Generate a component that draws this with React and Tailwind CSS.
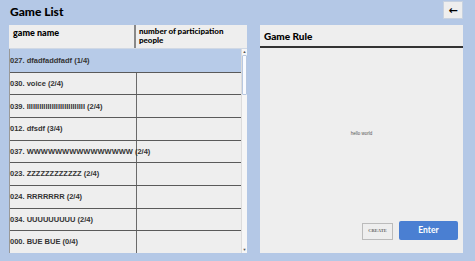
import React from "react";

const rows = [
  "027. dfadfaddfadf (1/4)",
  "030. voice (2/4)",
  "039. IIIIIIIIIIIIIIIIIIIIIIIIIIII (2/4)",
  "012. dfsdf (3/4)",
  "037. WWWWWWWWWWWWWWW (2/4)",
  "023. ZZZZZZZZZZZZ (2/4)",
  "024. RRRRRRR (2/4)",
  "034. UUUUUUUUU (2/4)",
  "000. BUE BUE (0/4)",
];

export default function App() {
  return (
    <div className="w-[475px] h-[261px] bg-[#b4c8e6] flex flex-col overflow-hidden">
      <div className="h-[25px] flex items-start justify-between shrink-0">
        <div className="ml-[10px] mt-[5px] text-[12px] leading-[14px] font-black text-black" style={{ fontFamily: "Lato, 'DejaVu Sans', sans-serif" }}>
          Game List
        </div>
        <button className="mr-[12px] mt-[1px] w-[20px] h-[18px] bg-[#eeeeee] border border-[#c8d2e0] flex items-center justify-center text-black text-[11px] font-bold leading-none" style={{ fontFamily: "'DejaVu Sans', sans-serif" }}>
          ←
        </button>
      </div>
      <div className="flex h-[228px]">
        <div className="ml-[9px] w-[238px] h-full bg-[#eeeeee] flex flex-col">
          <div className="h-[24px] flex shrink-0 border-b border-[#d0d8e4]" style={{ fontFamily: "Lato, 'DejaVu Sans', sans-serif" }}>
            <div className="w-[127px] border-r-2 border-[#888] pl-[4px] pt-[3px] text-[9px] leading-[9px] font-black text-black">
              game name
            </div>
            <div className="flex-1 pl-[3px] pt-[2px] text-[8px] leading-[8.5px] font-black text-black">
              number of participation people
            </div>
          </div>
          <div className="flex-1 flex">
            <div className="w-[232px] flex flex-col border-l border-[#999]">
              {rows.map((r, i) => (
                <div
                  key={i}
                  className={`h-[22.66px] flex items-center ${i === 0 ? "bg-[#b7cbe8]" : "bg-[#eeeeee] border-t border-[#5a5a5a]"}`}
                >
                  <div className={`w-[127px] h-full flex items-center whitespace-nowrap text-[7.5px] font-bold text-[#333] ${i === 0 ? "" : "border-r border-[#6a6a6a]"}`} style={{ fontFamily: "'Liberation Sans', Arial, sans-serif" }}>
                    {r}
                  </div>
                  <div className="flex-1 h-full" />
                </div>
              ))}
            </div>
            <div className="w-[6px] bg-[#f6f6f6] border-l border-[#dcdcdc] flex flex-col">
              <div className="h-[6px] flex items-center justify-center text-[4px] text-[#555] leading-none">▲</div>
              <div className="h-[40px] bg-[#f9fbff] border border-[#b8c8e0] rounded-[1px]" />
              <div className="flex-1" />
              <div className="h-[6px] flex items-center justify-center text-[4px] text-[#555] leading-none">▼</div>
            </div>
          </div>
        </div>
        <div className="ml-[13px] w-[203px] h-full bg-[#eeeeee] flex flex-col">
          <div className="h-[23px] border-b-2 border-[#333] pl-[4px] pt-[5px] text-[10px] leading-[12px] font-black text-black shrink-0" style={{ fontFamily: "Lato, 'DejaVu Sans', sans-serif" }}>
            Game Rule
          </div>
          <div className="flex-1 flex items-center justify-center text-[4.5px] text-[#555]" style={{ fontFamily: "'Liberation Sans', Arial, sans-serif" }}>
            hello world
          </div>
          <div className="flex items-center justify-end gap-[6px] pr-[5px] pb-[13px]">
            <button className="w-[31px] h-[17px] mt-[2px] border border-[#bbbbbb] bg-[#eeeeee] text-[4.5px] font-bold text-[#666] flex items-center justify-center" style={{ fontFamily: "'Liberation Serif', serif" }}>
              CREATE
            </button>
            <button className="w-[59px] h-[19px] rounded-[2px] bg-[#4a7fd2] text-white text-[8.5px] font-bold flex items-center justify-center" style={{ fontFamily: "Lato, 'DejaVu Sans', sans-serif" }}>
              Enter
            </button>
          </div>
        </div>
      </div>
    </div>
  );
}
